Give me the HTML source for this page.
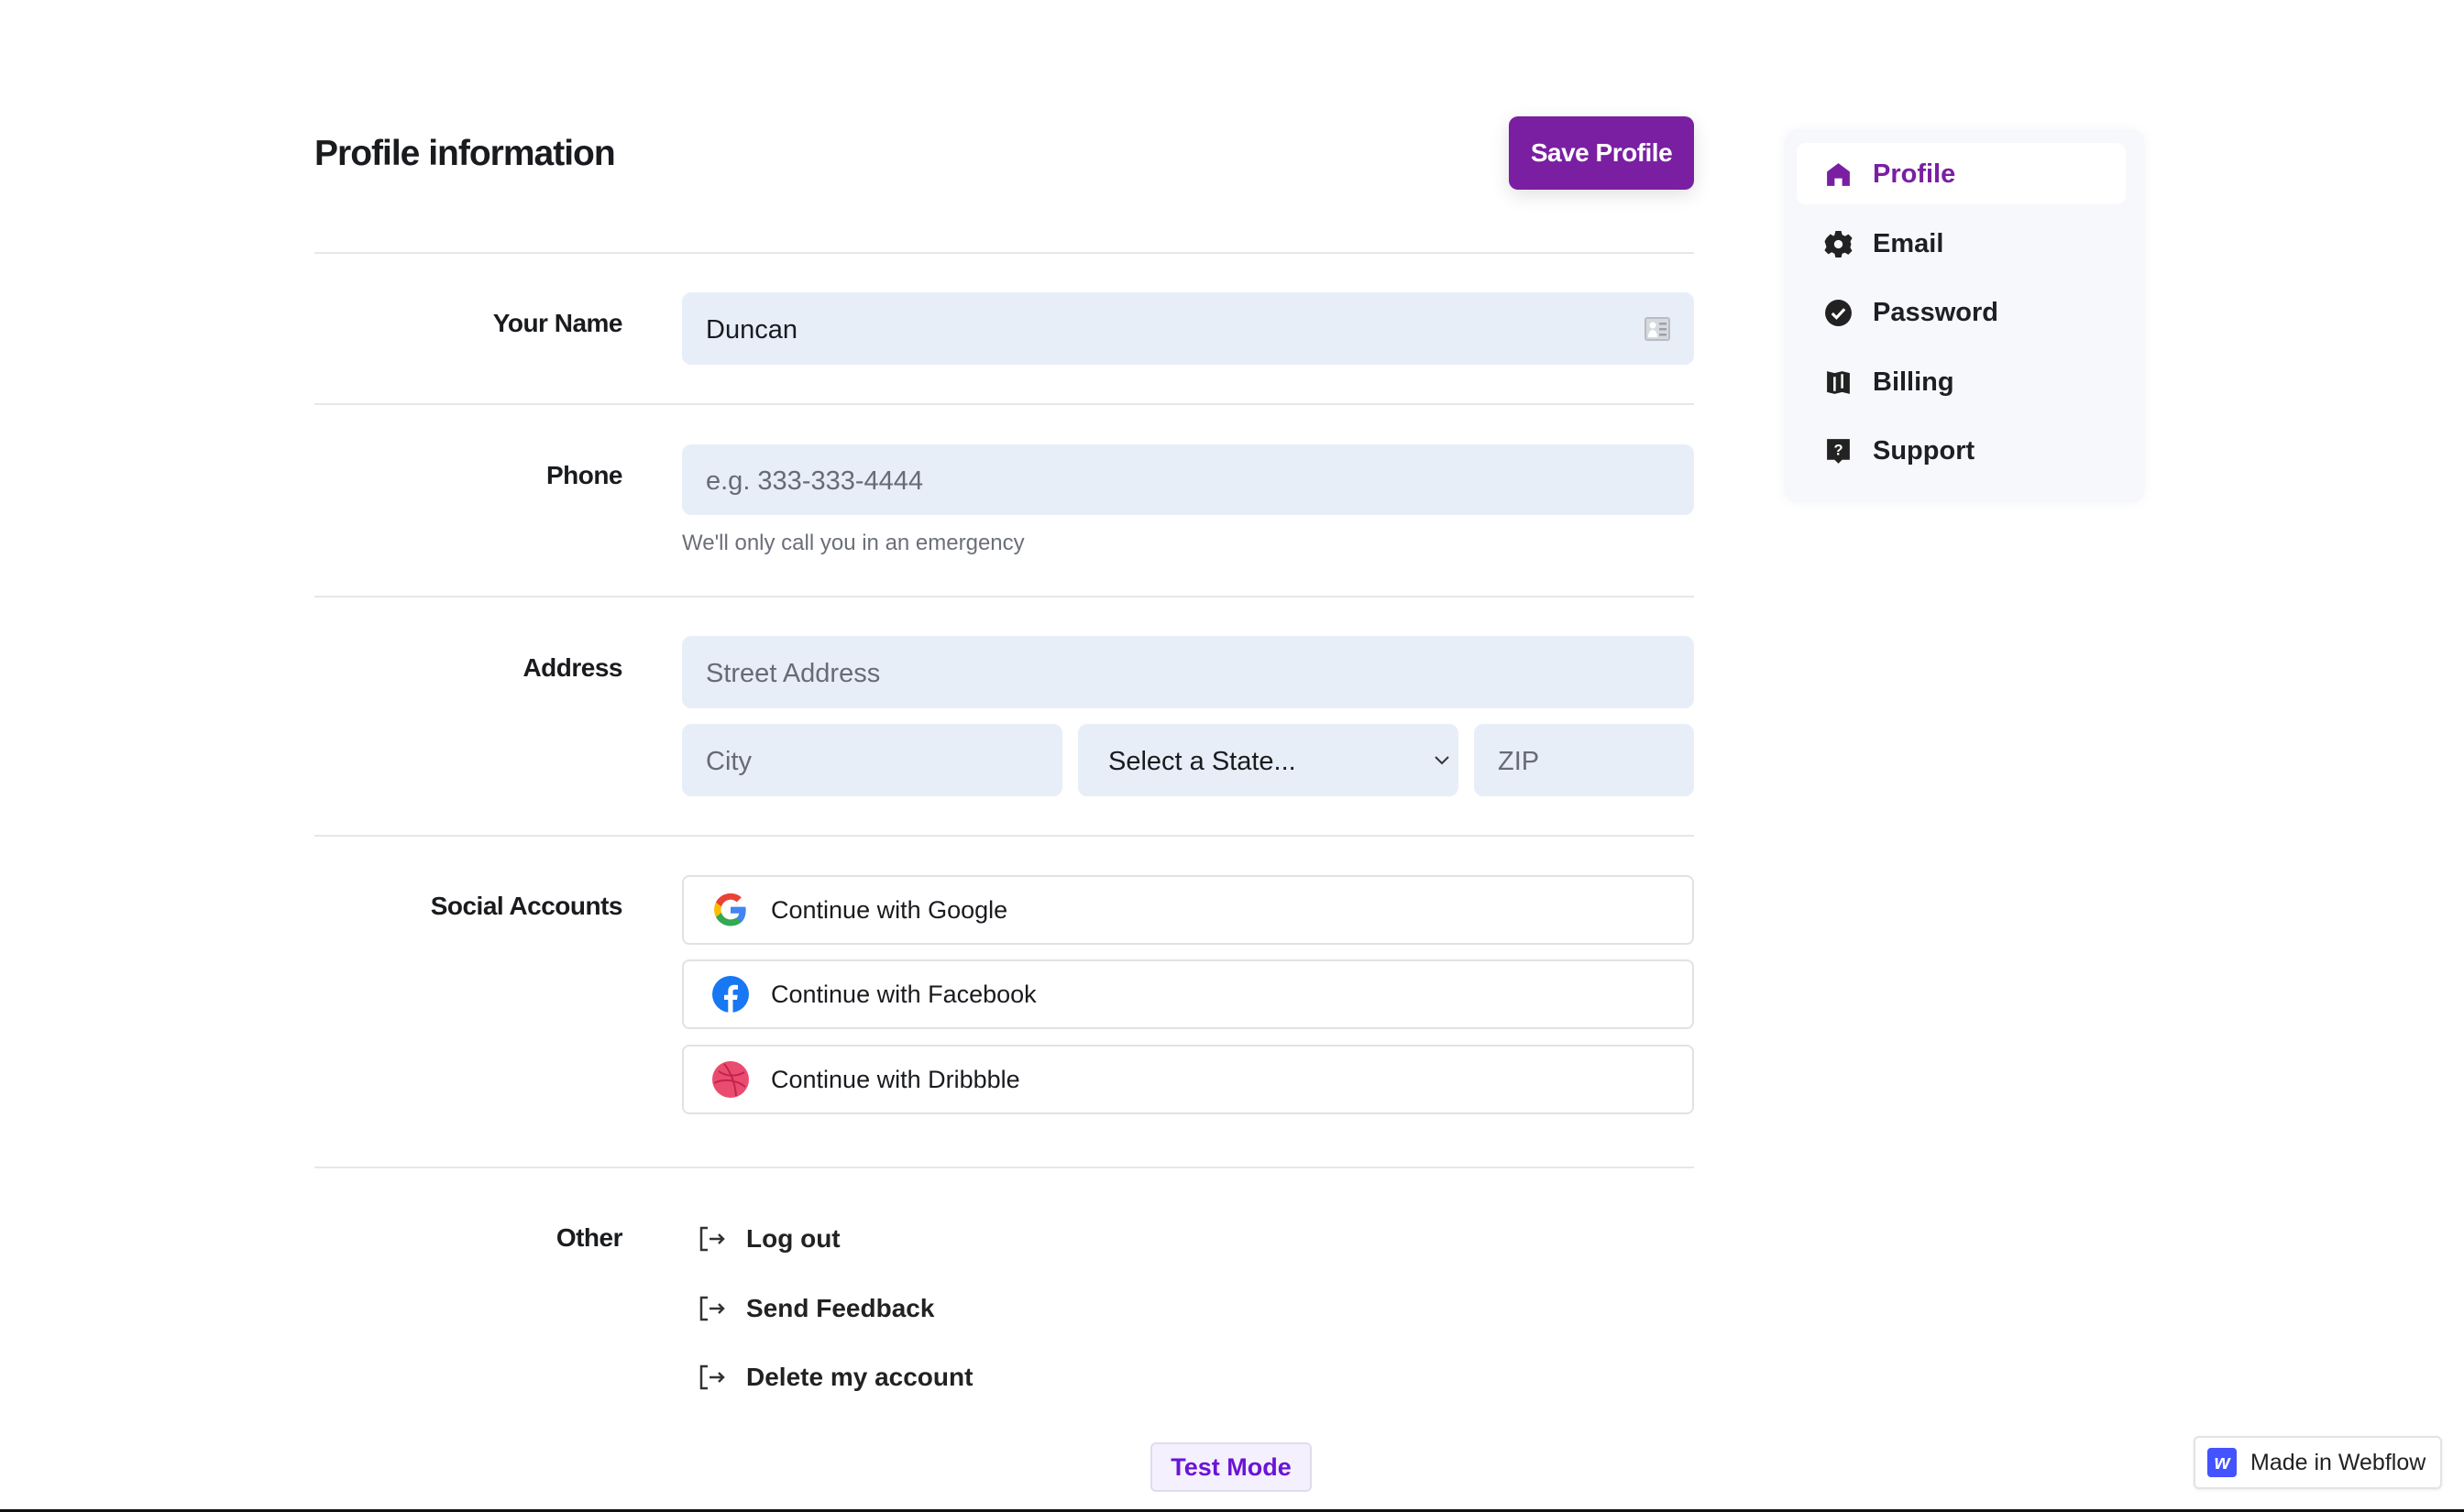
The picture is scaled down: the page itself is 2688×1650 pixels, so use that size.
<!DOCTYPE html>
<html><head><meta charset="utf-8"><style>
*{box-sizing:border-box;margin:0;padding:0}
body{width:2688px;height:1650px;background:#fff;position:relative;overflow:hidden;font-family:"Liberation Sans",sans-serif;color:#1a1b1f}
.a{position:absolute}
.h1{left:343px;top:146px;font-size:39px;font-weight:bold;letter-spacing:-1px}
.save{left:1646px;top:127px;width:202px;height:80px;background:#7a1fa2;border-radius:10px;color:#fff;font-size:28px;font-weight:bold;display:flex;align-items:center;justify-content:center;box-shadow:0 6px 20px rgba(0,0,0,.12);letter-spacing:-.5px}
.hr{left:343px;width:1505px;height:2px;background:#e6e7ea}
.lbl{right:2009px;font-size:28px;font-weight:bold;text-align:right;white-space:nowrap;letter-spacing:-.5px}
.inp{background:#e8eef8;border-radius:10px;font-size:29px;color:#666b75;display:flex;align-items:center;padding-left:26px;padding-top:3px}
.soc{left:744px;width:1104px;height:76px;border:2px solid #e1e2e5;border-radius:8px;display:flex;align-items:center;font-size:27px;color:#1a1b1f}
.soc svg{position:absolute;left:31px}
.soc span{position:absolute;left:95px}
.oth{left:762px;font-size:28px;font-weight:bold;display:flex;align-items:center;color:#222}
.oth span{margin-left:22px}
.side{left:1946px;top:141px;width:394px;height:408px;background:#f7f8fb;border-radius:16px;box-shadow:0 0 14px rgba(0,0,0,.04)}
.si{left:1990px;font-size:29px;font-weight:bold;display:flex;align-items:center;color:#1e1f24}
.si svg{width:31px;height:31px}
.si span{margin-left:22px}
</style></head><body>
<div class="a h1">Profile information</div>
<div class="a save">Save Profile</div>
<div class="a hr" style="top:275px"></div>
<div class="a hr" style="top:440px"></div>
<div class="a hr" style="top:650px"></div>
<div class="a hr" style="top:911px"></div>
<div class="a hr" style="top:1273px"></div>

<div class="a lbl" style="top:337px">Your Name</div>
<div class="a inp" style="left:744px;top:319px;width:1104px;height:79px;color:#1a1b1f">Duncan
<svg class="a" style="left:1049px;top:26px" width="30" height="28" viewBox="0 0 30 28"><rect x="1" y="1" width="28" height="26" rx="3" fill="#b9bcc2"/><rect x="3" y="3" width="24" height="22" fill="#d6d9de"/><circle cx="10" cy="10" r="3.5" fill="#fff"/><path d="M5 23c0-6 3-8 5-8s5 2 5 8z" fill="#fff"/><rect x="17" y="7" width="8" height="2.5" fill="#9da1a8"/><rect x="17" y="13" width="8" height="2.5" fill="#9da1a8"/><rect x="17" y="19" width="8" height="2.5" fill="#9da1a8"/></svg></div>

<div class="a lbl" style="top:503px">Phone</div>
<div class="a inp" style="left:744px;top:485px;width:1104px;height:77px">e.g. 333-333-4444</div>
<div class="a" style="left:744px;top:579px;font-size:24px;color:#6b6f78">We'll only call you in an emergency</div>

<div class="a lbl" style="top:713px">Address</div>
<div class="a inp" style="left:744px;top:694px;width:1104px;height:79px">Street Address</div>
<div class="a inp" style="left:744px;top:790px;width:415px;height:79px">City</div>
<div class="a inp" style="left:1176px;top:790px;width:415px;height:79px;color:#1a1b1f;padding-left:33px">Select a State...
<svg class="a" style="left:388px;top:34px" width="18" height="11" viewBox="0 0 18 11"><path d="M2 2l7 7 7-7" stroke="#333" stroke-width="2" fill="none"/></svg></div>
<div class="a inp" style="left:1608px;top:790px;width:240px;height:79px">ZIP</div>

<div class="a lbl" style="top:973px">Social Accounts</div>
<div class="a soc" style="top:955px"><svg width="40" height="40" viewBox="0 0 48 48"><path d="M44 24.5c0-1.5-.1-3-.4-4.5H24v8.5h11.2c-.5 2.7-2 5-4.3 6.5v5.4h7C42 36.6 44 31 44 24.5z" fill="#4285f4"/><path d="M24 45c5.8 0 10.7-1.9 14.2-5.2l-7-5.4c-1.9 1.3-4.4 2.1-7.2 2.1-5.600 0-10.3-3.8-12-8.8H4.8v5.6C8.3 40.3 15.6 45 24 45z" fill="#34a853"/><path d="M12 27.7c-.9-2.6-.9-5.4 0-8V14H4.8C1.7 20 1.7 27.4 4.8 33.3z" fill="#fbbc05"/><path d="M24 10.5c3.1 0 5.9 1.1 8.1 3.2l6.1-6.1C34.6 4.2 29.4 2.3 24 2.3 15.6 2.3 8.3 7 4.8 14l7.2 5.6c1.7-5.1 6.4-9.1 12-9.1z" fill="#ea4335"/></svg><span>Continue with Google</span></div>
<div class="a soc" style="top:1047px"><svg width="40" height="40" viewBox="0 0 40 40"><circle cx="20" cy="20" r="20" fill="#1877f2"/><path d="M22.5 40V26h4.5l.7-5.3h-5.2v-3.3c0-1.5.5-2.6 2.7-2.6h2.8V10c-.5-.1-2.2-.2-4-.2-4 0-6.7 2.4-6.7 6.9v4H13V26h4.3v14z" fill="#fff"/></svg><span>Continue with Facebook</span></div>
<div class="a soc" style="top:1140px"><svg width="40" height="40" viewBox="0 0 40 40"><circle cx="20" cy="20" r="20" fill="#ea4c6f"/><g stroke="#c32350" stroke-width="2" fill="none"><path d="M7 11c8 6 20 6 28 1"/><path d="M13 3c6 7 12 20 13 35"/><path d="M2 24c10-5 24-4 34 4"/></g></svg><span>Continue with Dribbble</span></div>

<div class="a lbl" style="top:1335px">Other</div>
<div class="a oth" style="top:1336px"><svg width="30" height="30" viewBox="0 0 30 30" fill="none" stroke="#333" stroke-width="2.5"><path d="M10 3H3v24h7"/><path d="M12 15h15M22 10l5 5-5 5"/></svg><span>Log out</span></div>
<div class="a oth" style="top:1412px"><svg width="30" height="30" viewBox="0 0 30 30" fill="none" stroke="#333" stroke-width="2.5"><path d="M10 3H3v24h7"/><path d="M12 15h15M22 10l5 5-5 5"/></svg><span>Send Feedback</span></div>
<div class="a oth" style="top:1487px"><svg width="30" height="30" viewBox="0 0 30 30" fill="none" stroke="#333" stroke-width="2.5"><path d="M10 3H3v24h7"/><path d="M12 15h15M22 10l5 5-5 5"/></svg><span>Delete my account</span></div>

<div class="a" style="left:1255px;top:1574px;width:176px;height:54px;background:#f5f0fd;border:2px solid #e2dbee;border-radius:6px;color:#6a14d8;font-size:27px;font-weight:bold;display:flex;align-items:center;justify-content:center">Test Mode</div>

<div class="a side"></div>
<div class="a" style="left:1960px;top:156px;width:359px;height:67px;background:#fff;border-radius:10px"></div>
<div class="a si" style="top:174px;color:#7a1fa2"><svg viewBox="0 0 30 30"><path d="M15 3L3 12v15h8v-8h8v8h8V12z" fill="#7a1fa2"/></svg><span>Profile</span></div>
<div class="a si" style="top:250px"><svg viewBox="0 0 30 30"><path d="M12 1h6l1 4 3 1.5 3.6-2 4 4-2 3.6L28.5 15l-1 3.4 2 3.6-4 4-3.6-2L19 25l-1 4h-6l-1-4-3-1.5-3.6 2-4-4 2-3.6L1.5 15 .5 12l2-3.6 4-4 3.6 2L11 5z" fill="#222"/><circle cx="15" cy="15" r="4.5" fill="#f7f8fb"/></svg><span>Email</span></div>
<div class="a si" style="top:325px"><svg viewBox="0 0 30 30"><circle cx="15" cy="15" r="14" fill="#222"/><path d="M8.5 15.5l4.5 4.5 8.5-9" stroke="#fff" stroke-width="3" fill="none"/></svg><span>Password</span></div>
<div class="a si" style="top:401px"><svg viewBox="0 0 30 30"><path d="M3 3l8 2 8-2 8 2v22l-8-2-8 2-8-2z" fill="#222"/><path d="M11 9v15M19 6v15" stroke="#f7f8fb" stroke-width="2.5"/></svg><span>Billing</span></div>
<div class="a si" style="top:476px"><svg viewBox="0 0 30 30"><path d="M3 2h24v22H19l-4 4-4-4H3z" fill="#222"/><text x="15" y="19" fill="#fff" font-size="16" font-weight="bold" text-anchor="middle" font-family="Liberation Sans">?</text></svg><span>Support</span></div>

<div class="a" style="left:2393px;top:1567px;width:271px;height:58px;background:#fff;border:2px solid #e2e3e6;border-radius:6px;display:flex;align-items:center;box-shadow:0 1px 3px rgba(0,0,0,.08)">
<div style="margin-left:13px;width:32px;height:32px;background:#4353ff;border-radius:4px;color:#fff;font-weight:bold;font-style:italic;font-size:22px;display:flex;align-items:center;justify-content:center">w</div>
<span style="margin-left:15px;font-size:25px;color:#222">Made in Webflow</span></div>
<div class="a" style="left:0;top:1647px;width:2688px;height:3px;background:#111"></div>
</body></html>
